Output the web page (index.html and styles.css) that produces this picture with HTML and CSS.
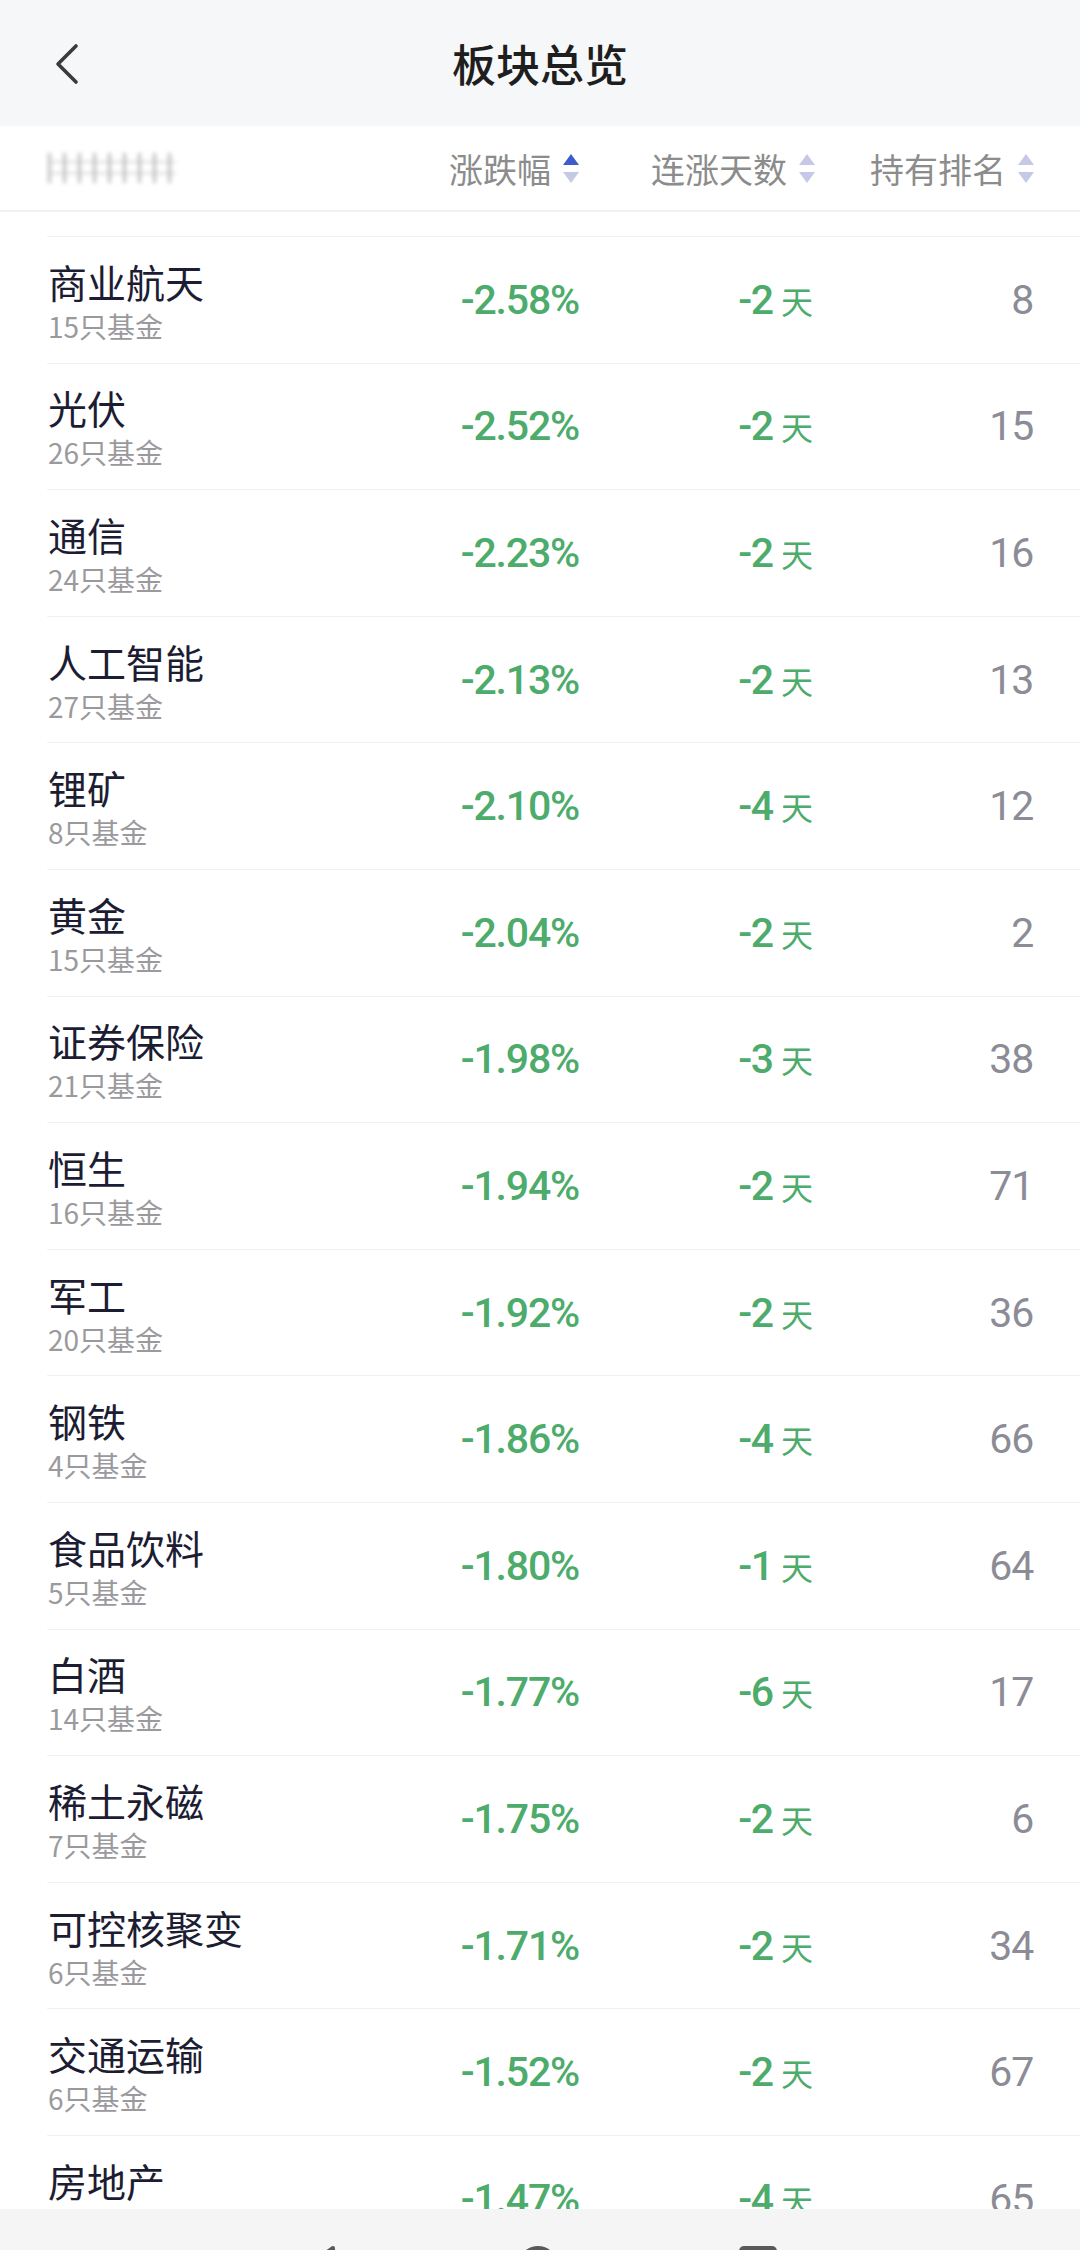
FILE: index.html
```html
<!DOCTYPE html>
<html lang="zh-CN">
<head>
    <meta charset="UTF-8">
    <meta name="viewport" content="width=device-width, initial-scale=1.0">
    <title>板块总览</title>
    <link rel="stylesheet" href="styles.css">
</head>
<body>
    <div class="topbar">
        <div class="back">
            <svg width="30" height="42" viewBox="0 0 30 42"><path d="M24 3 L6 21 L24 39" fill="none" stroke="#3a3a3a" stroke-width="3.6" stroke-linecap="round" stroke-linejoin="round"/></svg>
        </div>
        <h1>板块总览</h1>
        <div></div>
    </div>

    <div class="colhead">
        <div class="blurred"></div>
        <div class="sort">涨跌幅<span class="arrows"><i class="up active"></i><i class="down"></i></span></div>
        <div class="sort">连涨天数<span class="arrows"><i class="up"></i><i class="down"></i></span></div>
        <div class="sort">持有排名<span class="arrows"><i class="up"></i><i class="down"></i></span></div>
    </div>

    <div class="list">
        <div class="row"><div class="name">商业航天<small>15只基金</small></div><div class="pct">-2.58%</div><div class="days">-2<span>天</span></div><div class="rank">8</div></div>
        <div class="row"><div class="name">光伏<small>26只基金</small></div><div class="pct">-2.52%</div><div class="days">-2<span>天</span></div><div class="rank">15</div></div>
        <div class="row"><div class="name">通信<small>24只基金</small></div><div class="pct">-2.23%</div><div class="days">-2<span>天</span></div><div class="rank">16</div></div>
        <div class="row"><div class="name">人工智能<small>27只基金</small></div><div class="pct">-2.13%</div><div class="days">-2<span>天</span></div><div class="rank">13</div></div>
        <div class="row"><div class="name">锂矿<small>8只基金</small></div><div class="pct">-2.10%</div><div class="days">-4<span>天</span></div><div class="rank">12</div></div>
        <div class="row"><div class="name">黄金<small>15只基金</small></div><div class="pct">-2.04%</div><div class="days">-2<span>天</span></div><div class="rank">2</div></div>
        <div class="row"><div class="name">证券保险<small>21只基金</small></div><div class="pct">-1.98%</div><div class="days">-3<span>天</span></div><div class="rank">38</div></div>
        <div class="row"><div class="name">恒生<small>16只基金</small></div><div class="pct">-1.94%</div><div class="days">-2<span>天</span></div><div class="rank">71</div></div>
        <div class="row"><div class="name">军工<small>20只基金</small></div><div class="pct">-1.92%</div><div class="days">-2<span>天</span></div><div class="rank">36</div></div>
        <div class="row"><div class="name">钢铁<small>4只基金</small></div><div class="pct">-1.86%</div><div class="days">-4<span>天</span></div><div class="rank">66</div></div>
        <div class="row"><div class="name">食品饮料<small>5只基金</small></div><div class="pct">-1.80%</div><div class="days">-1<span>天</span></div><div class="rank">64</div></div>
        <div class="row"><div class="name">白酒<small>14只基金</small></div><div class="pct">-1.77%</div><div class="days">-6<span>天</span></div><div class="rank">17</div></div>
        <div class="row"><div class="name">稀土永磁<small>7只基金</small></div><div class="pct">-1.75%</div><div class="days">-2<span>天</span></div><div class="rank">6</div></div>
        <div class="row"><div class="name">可控核聚变<small>6只基金</small></div><div class="pct">-1.71%</div><div class="days">-2<span>天</span></div><div class="rank">34</div></div>
        <div class="row"><div class="name">交通运输<small>6只基金</small></div><div class="pct">-1.52%</div><div class="days">-2<span>天</span></div><div class="rank">67</div></div>
        <div class="row"><div class="name">房地产<small>9只基金</small></div><div class="pct">-1.47%</div><div class="days">-4<span>天</span></div><div class="rank">65</div></div>
    </div>

    <div class="navbar">
        <svg width="40" height="44" viewBox="0 0 40 44"><path d="M33 4 L7 22 L33 40 Z" fill="none" stroke="#5a5a5a" stroke-width="4" stroke-linejoin="round"/></svg>
        <svg width="44" height="44" viewBox="0 0 44 44"><circle cx="22" cy="22" r="18" fill="none" stroke="#5a5a5a" stroke-width="4"/></svg>
        <svg width="44" height="44" viewBox="0 0 44 44"><rect x="3" y="2" width="38" height="38" rx="5" fill="#5a5a5a"/></svg>
    </div>
</body>
</html>
```

FILE: styles.css
```css
body {
    margin: 0;
    height: 2250px;
    overflow: hidden;
    display: flex;
    flex-direction: column;
    background: #fff;
    font-family: "Noto Sans CJK SC", "Noto Sans", sans-serif;
    color: #1c1d33;
}
.topbar {
    height: 126px;
    flex-shrink: 0;
    background: #f6f7f9;
    display: grid;
    grid-template-columns: 1fr auto 1fr;
    align-items: center;
}
.back {
    padding-left: 52px;
    padding-top: 2px;
    display: flex;
}
h1 {
    margin: 0;
    font-size: 44px;
    font-weight: 500;
    color: #1e1e1e;
    line-height: 1;
}
.colhead {
    height: 84px;
    flex-shrink: 0;
    border-bottom: 2px solid #f0f1f3;
    padding: 0 46px 0 48px;
    display: grid;
    grid-template-columns: 1fr 179px 236px 219px;
    align-items: center;
}
.blurred {
    width: 128px;
    height: 30px;
    background:
        repeating-linear-gradient(90deg, #8a8a8a 0 3px, transparent 3px 15px),
        linear-gradient(#fff 0 8px, #bbb 8px 10px, #fff 10px 19px, #bbb 19px 21px, #fff 21px);
    filter: blur(2px);
    opacity: 0.55;
}
.sort {
    display: flex;
    justify-content: flex-end;
    align-items: center;
    font-size: 34px;
    color: #8c8c8c;
}
.arrows {
    display: flex;
    flex-direction: column;
    gap: 7px;
    margin-left: 12px;
}
.arrows i {
    width: 0;
    height: 0;
    border-left: 8px solid transparent;
    border-right: 8px solid transparent;
}
.arrows .up {
    border-bottom: 11px solid #c6c9e6;
}
.arrows .down {
    border-top: 11px solid #c6c9e6;
}
.arrows .up.active {
    border-bottom-color: #3d5bcc;
}
.list {
    flex: 1;
    overflow: hidden;
    padding: 24px 0 0 47px;
}
.row {
    height: 126.6px;
    box-sizing: border-box;
    border-top: 1px solid #f2f2f3;
    padding-right: 46px;
    display: grid;
    grid-template-columns: 1fr 179px 236px 219px;
    align-items: center;
}
.name {
    display: flex;
    flex-direction: column;
    font-size: 39px;
    line-height: 44px;
    padding-left: 1px;
    padding-top: 2px;
}
.name small {
    font-size: 28px;
    line-height: 34px;
    margin-top: 6px;
    color: #9a9a9e;
}
.pct, .days, .rank {
    text-align: right;
    font-family: Roboto, "Noto Sans", sans-serif;
    font-size: 41px;
    font-weight: 500;
    letter-spacing: -1.2px;
}
.pct, .days {
    color: #4dab6b;
}
.days {
    padding-right: 2px;
}
.days span {
    font-family: "Noto Sans CJK SC", sans-serif;
    font-size: 32px;
    font-weight: 400;
    letter-spacing: 0;
    margin-left: 8px;
}
.rank {
    color: #8b8c96;
    font-weight: 400;
    padding-right: 1px;
}
.navbar {
    height: 41px;
    flex-shrink: 0;
    background: #f5f5f5;
    overflow: hidden;
    display: flex;
    justify-content: center;
    gap: 176px;
    padding-top: 35px;
    box-sizing: border-box;
}
```
